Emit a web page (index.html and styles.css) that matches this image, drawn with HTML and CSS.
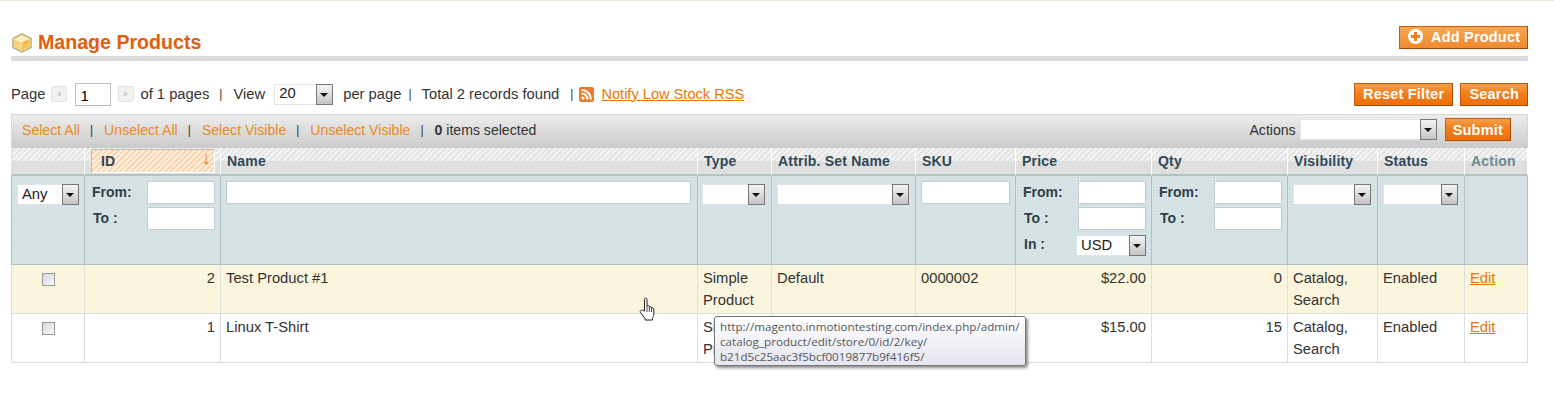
FILE: index.html
```html
<!DOCTYPE html>
<html lang="en">
<head>
  <meta charset="UTF-8">
  <title>Manage Products</title>
  <link rel="stylesheet" href="styles.css">
</head>
<body>
  <div class="content">
    <div class="page-head">
      <h3 class="page-title">
        <svg class="box-icon" width="22" height="20" viewBox="0 0 22 20">
          <path d="M11 1 20 5.500V14.500L11 19 2 14.500V5.500Z" fill="#f7e3a4" stroke="#c4b27e" stroke-width="1.600" stroke-linejoin="round"/>
          <path d="M3.500 6 11 9.700 18.500 6 11 2.500Z" fill="#fcf0c4"/>
          <path d="M11 10V17.500L18.500 13.800V6.300Z" fill="#efc75e"/>
          <path d="M3.500 6.500 11 10V17.500L3.500 13.800Z" fill="#f5d67e"/>
          <path d="M8 8.500 14 11 18 8.500V6.500L11 9.700Z" fill="#f0b030"/>
        </svg>
        Manage Products
      </h3>
      <button class="btn btn-add" type="button"><span class="plus"></span>Add Product</button>
    </div>

    <div class="pager">
      <span>Page</span>
      <span class="page-arrow arrow-prev"></span>
      <input class="page-input" type="text" value="1">
      <span class="page-arrow arrow-next"></span>
      <span>of 1 pages</span>
      <span class="sep">|</span>
      <span>View</span>
      <span class="select view-select"><select><option>20</option></select></span>
      <span>per page</span>
      <span class="sep sep-tight">|</span>
      <span>Total 2 records found</span>
      <span class="sep sep-rss">|</span>
      <svg class="rss" width="15" height="15" viewBox="0 0 15 15">
        <rect width="15" height="15" rx="2" fill="#ee7a2a"/>
        <circle cx="4" cy="11" r="1.600" fill="#fff"/>
        <path d="M2.500 6.500A6 6 0 0 1 8.500 12.500M2.500 3A9.500 9.500 0 0 1 12 12.500" fill="none" stroke="#fff" stroke-width="2"/>
      </svg>
      <a class="link rss-link" href="#">Notify Low Stock RSS</a>
      <span class="pager-buttons">
        <button class="btn" type="button">Reset Filter</button>
        <button class="btn" type="button">Search</button>
      </span>
    </div>

    <div class="massaction">
      <a class="mass-link" href="#">Select All</a><span class="sep">|</span>
      <a class="mass-link" href="#">Unselect All</a><span class="sep">|</span>
      <a class="mass-link" href="#">Select Visible</a><span class="sep">|</span>
      <a class="mass-link" href="#">Unselect Visible</a><span class="sep">|</span>
      <span><b>0</b> items selected</span>
      <span class="mass-actions">
        <span>Actions</span>
        <span class="select actions-select"><select><option></option></select></span>
        <button class="btn btn-submit" type="button">Submit</button>
      </span>
    </div>

    <table class="grid">
      <colgroup>
        <col class="c-check"><col class="c-id"><col class="c-name"><col class="c-type"><col class="c-set">
        <col class="c-sku"><col class="c-price"><col class="c-qty"><col class="c-vis"><col class="c-status"><col class="c-action">
      </colgroup>
      <thead>
        <tr class="headings">
          <th></th>
          <th class="sorted"><span class="sorted-box">ID<span class="sort-arrow">↓</span></span></th>
          <th>Name</th>
          <th>Type</th>
          <th>Attrib. Set Name</th>
          <th>SKU</th>
          <th>Price</th>
          <th>Qty</th>
          <th>Visibility</th>
          <th>Status</th>
          <th class="no-link">Action</th>
        </tr>
        <tr class="filter">
          <td><span class="select any-select"><select><option>Any</option></select></span></td>
          <td>
            <div class="range"><label>From:</label><input type="text"></div>
            <div class="range"><label class="to">To :</label><input type="text"></div>
          </td>
          <td class="wide"><input class="full" type="text"></td>
          <td class="wide type-filter"><span class="select full-select"><select><option></option></select></span></td>
          <td class="wide"><span class="select full-select"><select><option></option></select></span></td>
          <td><input class="full" type="text"></td>
          <td>
            <div class="range"><label>From:</label><input type="text"></div>
            <div class="range"><label class="to">To :</label><input type="text"></div>
            <div class="range"><label class="to">In :</label><span class="select usd-select"><select><option>USD</option></select></span></div>
          </td>
          <td>
            <div class="range"><label>From:</label><input type="text"></div>
            <div class="range"><label class="to">To :</label><input type="text"></div>
          </td>
          <td class="wide"><span class="select full-select"><select><option></option></select></span></td>
          <td class="wide"><span class="select full-select"><select><option></option></select></span></td>
          <td></td>
        </tr>
      </thead>
      <tbody>
        <tr class="even">
          <td class="center"><input class="check" type="checkbox"></td>
          <td class="num">2</td>
          <td>Test Product #1</td>
          <td>Simple Product</td>
          <td>Default</td>
          <td>0000002</td>
          <td class="num">$22.00</td>
          <td class="num">0</td>
          <td>Catalog, Search</td>
          <td>Enabled</td>
          <td><a class="link" href="#">Edit</a></td>
        </tr>
        <tr>
          <td class="center"><input class="check" type="checkbox"></td>
          <td class="num">1</td>
          <td>Linux T-Shirt</td>
          <td>Simple Product</td>
          <td></td>
          <td></td>
          <td class="num">$15.00</td>
          <td class="num">15</td>
          <td>Catalog, Search</td>
          <td>Enabled</td>
          <td><a class="link" href="#">Edit</a></td>
        </tr>
      </tbody>
    </table>
  </div>

  <svg class="hand" width="18" height="24" viewBox="0 0 18 24">
    <path d="M5.500 14V2.500C5.500 .8 8 .8 8 2.500V9.500C8 8.200 10.300 8.200 10.300 9.700V10.500C10.300 9.300 12.500 9.300 12.500 10.800V11.500C12.500 10.400 14.800 10.600 14.800 12V17C14.800 19 14 20 13.500 21.500V23H6V21.500L1.500 15.500C.5 14 2.500 12.300 3.800 13.700Z" fill="#fff" stroke="#222" stroke-width="1" stroke-linejoin="round"/>
    <path d="M8 10V15M10.300 10.500V15M12.500 11.500V15" fill="none" stroke="#222" stroke-width=".8"/>
  </svg>

  <div class="tooltip">http://magento.inmotiontesting.com/index.php/admin/<br>catalog_product/edit/store/0/id/2/key/<br>b21d5c25aac3f5bcf0019877b9f416f5/</div>
</body>
</html>
```

FILE: styles.css
```css
body {
  margin: 0;
  border-top: 1px solid #efe8da;
  background-color: #fff;
  color: #333;
  font-family: "Liberation Sans", Arial, sans-serif;
  font-size: 14.750px;
  overflow: hidden;
}

.content {
  width: 1517px;
  margin-left: 11px;
}

a.link {
  color: #ea7601;
  text-decoration: underline;
}

.page-head {
  display: flex;
  justify-content: space-between;
  align-items: flex-start;
  height: 30px;
  padding-top: 25px;
  border-bottom: 5px solid #dcdcdc;
}

.page-title {
  display: flex;
  align-items: center;
  gap: 5px;
  margin: 5px 0 0;
  color: #e25e0a;
  font-size: 19.600px;
  font-weight: bold;
}

.btn {
  height: 23px;
  padding: 0 8px;
  border: 1px solid #c85c08;
  border-right-color: #a94c05;
  border-bottom-color: #a94c05;
  background: linear-gradient(#f6a04e, #f37d1a 45%, #ee6f0a);
  color: #fff;
  font-family: inherit;
  font-size: 14.500px;
  font-weight: bold;
  letter-spacing: .2px;
  white-space: nowrap;
}

.btn-add {
  display: flex;
  align-items: center;
  width: 129px;
  padding-bottom: 2px;
  padding-left: 8px;
  background: linear-gradient(#f6a855, #f08a2e);
}

.plus {
  position: relative;
  flex: none;
  width: 15px;
  height: 15px;
  margin-right: 8px;
  border-radius: 50%;
  background-color: #fff;
}

.plus::before,
.plus::after {
  content: "";
  position: absolute;
  background-color: #ee7f22;
}

.plus::before {
  left: 3px;
  top: 6px;
  width: 9px;
  height: 3px;
}

.plus::after {
  left: 6px;
  top: 3px;
  width: 3px;
  height: 9px;
}

.pager {
  display: flex;
  align-items: center;
  height: 24px;
  margin-top: 21px;
  margin-bottom: 8px;
}

.pager > * {
  flex: none;
}

.page-arrow {
  position: relative;
  width: 14px;
  height: 14px;
  margin: 0 8px 0 6px;
  border: 1px solid #e4e4e4;
  border-radius: 2px;
  background-color: #f2f2f2;
}

.page-arrow::after {
  content: "";
  position: absolute;
  top: 4px;
  left: 5px;
  border-top: 3px solid transparent;
  border-bottom: 3px solid transparent;
}

.arrow-prev::after {
  border-right: 4px solid #cfcfcf;
}

.arrow-next::after {
  border-left: 4px solid #cfcfcf;
}

.arrow-next {
  margin: 0 6px 0 7px;
}

.page-input {
  box-sizing: border-box;
  width: 36px;
  height: 23px;
  margin: 1px 0 0;
  padding: 2px 4px 0;
  border: 1px solid #bdbdbd;
  font-family: inherit;
  font-size: 15px;
}

.sep {
  margin: 0 11px 0 10px;
  font-size: 12px;
}

.sep-tight {
  margin: 0 10px 0 7px;
}

.sep-rss {
  margin: 0 6px 0 11px;
}

.view-select {
  margin-right: 10px;
  margin-left: 9px;
}

.view-select select {
  width: 59px;
}

.rss {
  margin-right: 7px;
}

.rss-link {
  font-size: 14.600px;
}

.pager-buttons {
  display: flex;
  gap: 7px;
  margin-left: auto;
}

.massaction {
  display: flex;
  align-items: center;
  box-sizing: border-box;
  height: 34px;
  padding-bottom: 4px;
  padding-left: 10px;
  border: 1px solid #d6d6d6;
  border-bottom: 0;
  background: linear-gradient(#ededed, #cacaca);
  font-size: 14.100px;
}

.mass-link {
  color: #ea8a1c;
  text-decoration: none;
}

.mass-actions {
  display: flex;
  align-items: center;
  gap: 4px;
  margin-left: auto;
  margin-right: 16px;
}

.actions-select select {
  width: 137px;
}

.btn-submit {
  height: 23px;
  margin-left: 4px;
  padding: 0 7px;
}

.select {
  position: relative;
  display: inline-block;
  vertical-align: top;
}

.select select {
  display: block;
  box-sizing: border-box;
  height: 21px;
  padding: 0 0 2px 4px;
  border: 1px solid #dfe6e8;
  border-radius: 0;
  background-color: #fff;
  color: #222;
  font-family: inherit;
  font-size: 14.750px;
  appearance: none;
}

/* the little grey dropdown button */
.select::before {
  content: "";
  position: absolute;
  top: 0;
  right: 0;
  width: 15px;
  height: 19px;
  border: 1px solid #777;
  background: linear-gradient(#f4f4f4, #c4c4c4);
}

.select::after {
  content: "";
  position: absolute;
  top: 9px;
  right: 5px;
  border-top: 4px solid #111;
  border-right: 4px solid transparent;
  border-left: 4px solid transparent;
}

.grid {
  width: 1517px;
  border-collapse: separate;
  border-spacing: 0;
  table-layout: fixed;
}

.c-check { width: 74px; }
.c-id { width: 136px; }
.c-name { width: 477px; }
.c-type { width: 74px; }
.c-set { width: 144px; }
.c-sku { width: 100px; }
.c-price { width: 136px; }
.c-qty { width: 136px; }
.c-vis { width: 90px; }
.c-status { width: 87px; }
.c-action { width: 63px; }

.grid td,
.grid th {
  box-sizing: border-box;
  border-right: 1px solid #dadfe0;
  border-bottom: 1px solid #dadfe0;
  vertical-align: top;
}

.grid tr > :first-child {
  border-left: 1px solid #dadfe0;
}

.headings th {
  height: 28px;
  padding: 0 6px;
  border-right-color: #fff;
  border-bottom: 2px solid #b4c2c6;
  background:
    linear-gradient(transparent 50%, #dfdfdf 50%),
    repeating-linear-gradient(135deg, #f3f3f3 0 2px, #e4e4e4 2px 4px);
  color: #2f4858;
  font-size: 14px;
  font-weight: bold;
  line-height: 26px;
  text-align: left;
  letter-spacing: .2px;
}

.headings th.no-link {
  color: #6f8a95;
}

.headings th.sorted {
  padding: 1px 5px 0 6px;
}

.sorted-box {
  display: flex;
  justify-content: space-between;
  box-sizing: border-box;
  height: 24px;
  padding: 0 3px 0 9px;
  border: 1px solid #fff;
  border-top-color: #bba;
  border-left-color: #bba;
  background: repeating-linear-gradient(135deg, #fdeedd 0 2px, #f9d6b0 2px 4px);
  line-height: 23px;
}

.sort-arrow {
  color: #f07a1a;
  font-size: 18px;
  line-height: 17px;
}

.filter td {
  height: 89px;
  padding: 5px 5px 0;
  border-right-color: #b2c0c4;
  border-bottom-color: #b2c0c4;
  background-color: #d2e0e3;
  background-image:
    linear-gradient(rgba(255, 255, 255, .12) 1px, transparent 1px),
    linear-gradient(90deg, rgba(255, 255, 255, .12) 1px, transparent 1px);
  background-size: 3px 3px;
}

.filter td.wide {
  padding-right: 6px;
}

.filter td.type-filter {
  padding-left: 4px;
}

.grid .filter > :first-child {
  border-left-color: #b2c0c4;
}

.filter input {
  box-sizing: border-box;
  height: 23px;
  border: 1px solid #c2cdd0;
  border-radius: 1px;
  background-color: #fff;
}

.filter input.full {
  width: 100%;
}

.filter .select {
  margin-top: 3px;
}

.full-select {
  display: block;
}

.full-select select {
  width: 100%;
}

.any-select select {
  width: 62px;
}

.range {
  display: flex;
  justify-content: space-between;
  align-items: center;
  height: 23px;
  margin-bottom: 3px;
  padding-left: 2px;
  color: #2f3f47;
  font-size: 14px;
  font-weight: bold;
}

.range label {
  margin-bottom: 2px;
}

.range label.to {
  padding-left: 1px;
}

.range input {
  width: 68px;
}

.usd-select select {
  width: 70px;
}

.filter .usd-select {
  margin: 2px 0 0;
}

tbody td {
  padding: 2px 5px 2px 5px;
  line-height: 22px;
  overflow: hidden;
}

tbody tr {
  height: 49px;
}

tr.even td {
  background-color: #fcf5dd;
}

.num {
  text-align: right;
}

.grid td.center {
  padding: 8px 0 0 30px;
}

.check {
  display: block;
  width: 13px;
  height: 13px;
  margin: 0;
  border: 1px solid #999;
  background: linear-gradient(135deg, #d8d8d8, #f8f8ff);
  appearance: none;
}

.hand {
  position: absolute;
  left: 639px;
  top: 297px;
}

.tooltip {
  position: absolute;
  left: 714px;
  top: 316px;
  box-sizing: border-box;
  width: 312px;
  height: 50px;
  padding: 2px 5px;
  border: 1px solid #76767a;
  border-radius: 3px;
  background: linear-gradient(#fff, #e4e5f0);
  box-shadow: 2px 2px 3px rgba(0, 0, 0, .45);
  color: #575757;
  font-family: "Open Sans", "DejaVu Sans", sans-serif;
  font-size: 11.650px;
  line-height: 15px;
  white-space: nowrap;
}
```
